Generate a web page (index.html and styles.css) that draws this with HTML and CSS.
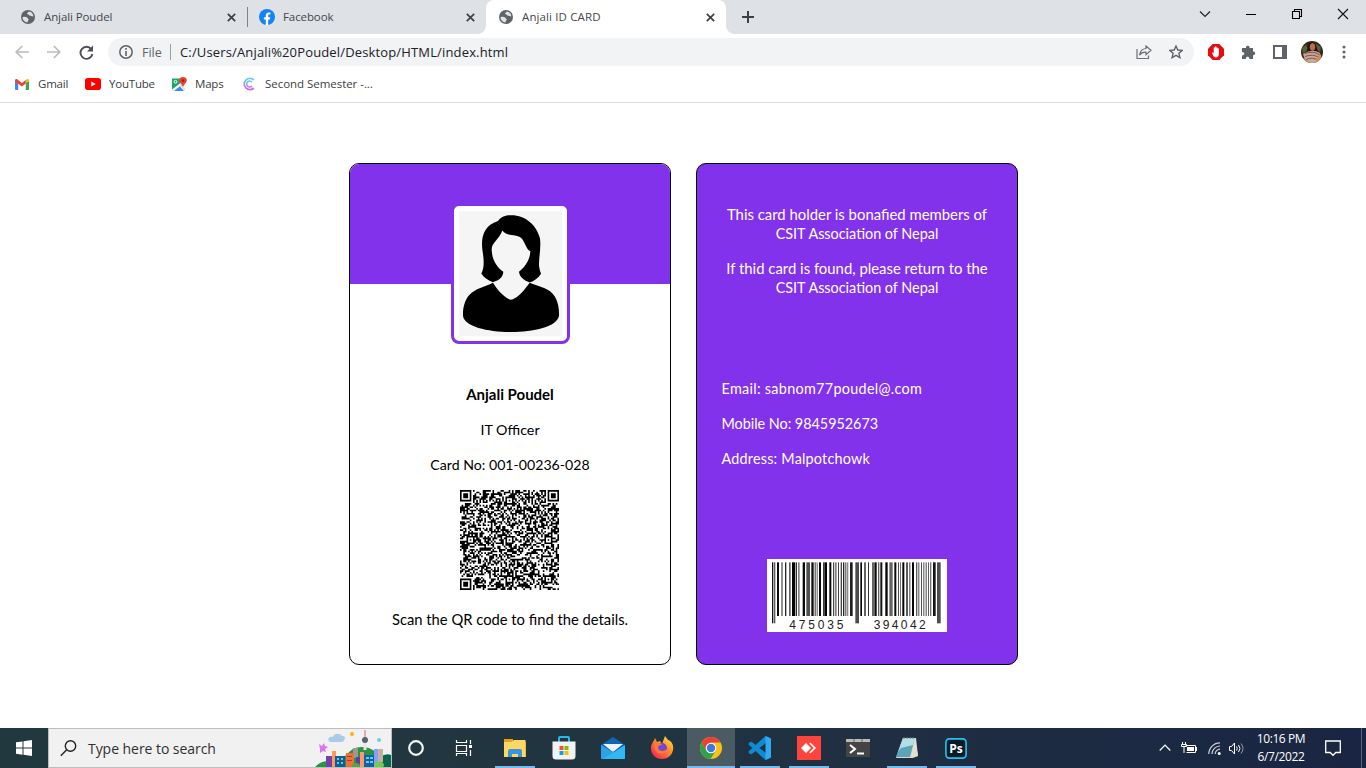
FILE: index.html
```html
<!DOCTYPE html>
<html lang="en">
<head>
<meta charset="utf-8">
<title>Anjali ID CARD</title>
<link rel="stylesheet" href="styles.css">
</head>
<body>
<svg class="defs" width="0" height="0">
  <defs>
    <symbol id="globe" viewBox="0 0 14 14"><circle cx="7" cy="7" r="7" fill="#5f6368"/><path d="M1.500 7.200C3 6.400 5 6.600 6.200 7.400c.8.500.6 1.500 1.600 1.600 0 1.200-.9 1.300-1.300 3.400C3.900 12.300 1.500 10 1.500 7.200zM7.600 1.600c-.2 1.200-1.400 1-1.600 2 .2 1.300 2.200.500 2.400 2 .5.900 2.300.300 3.800 1 .3-2.400-1.400-4.800-4.600-5z" fill="#dee1e6"/></symbol>
    <symbol id="close" viewBox="0 0 9 9"><path d="M.8.8l7.400 7.400M8.200.8L.8 8.200" stroke="#3c4043" stroke-width="1.700"/></symbol>
  </defs>
</svg>

<header class="tabs">
  <div class="tab tab-first"><svg class="fav" width="14" height="14"><use href="#globe"/></svg><span class="tab-title">Anjali Poudel</span><svg class="x" width="9" height="9"><use href="#close"/></svg></div>
  <div class="tab tab-second"><svg class="fav" width="16" height="16" viewBox="0 0 16 16"><circle cx="8" cy="8" r="8" fill="#1183f5"/><path d="M6.800 16v-5.500H4.900V8.200h1.900V6.500c0-2 1.200-3.100 3-3.100.9 0 1.600.1 1.600.1v2h-1c-1 0-1.200.6-1.200 1.200v1.500h2.100l-.4 2.300H9.200V16z" fill="#fff"/></svg><span class="tab-title">Facebook</span><svg class="x" width="9" height="9"><use href="#close"/></svg></div>
  <div class="tab tab-active"><svg class="fav" width="14" height="14"><use href="#globe"/></svg><span class="tab-title">Anjali ID CARD</span><svg class="x" width="9" height="9"><use href="#close"/></svg></div>
  <svg class="plus" width="12" height="12" viewBox="0 0 12 12"><path d="M6 0v12M0 6h12" stroke="#3c4043" stroke-width="2"/></svg>
  <div class="window-controls">
    <svg width="46" height="28" viewBox="0 0 46 28"><path d="M18 11.500l5 5 5-5" fill="none" stroke="#222" stroke-width="1.200"/></svg>
    <svg width="46" height="28" viewBox="0 0 46 28"><path d="M18 14.500h10" stroke="#000"/></svg>
    <svg width="46" height="28" viewBox="0 0 46 28"><path d="M18.500 11.500h7v7h-7zM20.500 11.500v-2h7v7h-2" fill="none" stroke="#000" stroke-width="1.100"/></svg>
    <svg width="46" height="28" viewBox="0 0 46 28"><path d="M18 9l10 10M28 9L18 19" stroke="#111" stroke-width="1.100"/></svg>
  </div>
</header>

<div class="toolbar">
  <div class="nav">
    <svg width="14" height="14" viewBox="0 0 14 14"><path d="M14 7H1.500M7.200 1L1.200 7l6 6" fill="none" stroke="#babcbe" stroke-width="1.700"/></svg>
    <svg width="14" height="14" viewBox="0 0 14 14"><path d="M0 7h12.500M6.800 1l6 6-6 6" fill="none" stroke="#babcbe" stroke-width="1.700"/></svg>
    <svg width="15" height="15" viewBox="0 0 15 15"><path d="M12.300 4.200A6 6 0 1 0 13.400 9" fill="none" stroke="#4a4d51" stroke-width="1.900"/><path d="M14 .6v6H8z" fill="#4a4d51"/></svg>
  </div>
  <div class="omnibox">
    <svg width="14" height="14" viewBox="0 0 14 14"><circle cx="7" cy="7" r="6.200" fill="none" stroke="#5f6368" stroke-width="1.500"/><path d="M7 3v1.700M7 6v5" stroke="#5f6368" stroke-width="1.600"/></svg>
    <span class="scheme">File</span><span class="divider"></span><span class="url">C:/Users/Anjali%20Poudel/Desktop/HTML/index.html</span>
    <svg class="share" width="16" height="15" viewBox="0 0 16 15"><path d="M1 4v9.500h11.500v-3" fill="none" stroke="#6d7074" stroke-width="1.200"/><path d="M10 1l5 4.300-5 4.300V7.200C7 7 5 8 3.500 10.200 4 6.500 6.500 3.800 10 3.500z" fill="none" stroke="#6d7074" stroke-width="1.200"/></svg>
    <svg width="14" height="14" viewBox="0 0 14 14"><path d="M7 1l1.800 4 4.400.4-3.300 2.900 1 4.300L7 10.300l-3.900 2.300 1-4.300L.8 5.400 5.200 5z" fill="none" stroke="#5f6368" stroke-width="1.400"/></svg>
  </div>
  <div class="extensions">
    <svg width="16" height="16" viewBox="0 0 16 16"><path d="M4.700 0h6.600L16 4.700v6.600L11.300 16H4.700L0 11.300V4.700z" fill="#e40d12"/><path d="M4 8.500c.9-.4 1.500.5 1.700 1V4c0-.9 1.300-.9 1.300 0V3c0-.9 1.300-.9 1.300 0v1c0-.9 1.300-.9 1.300 0v1c0-.9 1.300-.9 1.300 0v4.800c0 2.400-1.300 3.600-3 3.600-2.500 0-3-2-3.900-4.900z" fill="#fff"/></svg>
    <svg width="15" height="15" viewBox="0 0 15 15"><path d="M1 3h4V2.500c0-2.400 3.600-2.400 3.600 0V3H12v3.600h.4c2.400 0 2.400 3.700 0 3.700H12V14H8.300v-.6c0-2.300-3.400-2.300-3.400 0v.6H1v-3.600h.4c2.500 0 2.500-3.400 0-3.400H1z" fill="#5f6368"/></svg>
    <svg width="14" height="14" viewBox="0 0 14 14"><path d="M1 1h12v12H1z" fill="none" stroke="#5f6368" stroke-width="2"/><path d="M9 1h4v12H9z" fill="#5f6368"/></svg>
    <svg width="22" height="22" viewBox="0 0 22 22"><clipPath id="face"><circle cx="11" cy="11" r="11"/></clipPath><g clip-path="url(#face)"><path d="M0 0h22v22H0z" fill="#332a1c"/><path d="M1 7l4-3 2 4-5 5zM15 3l5 3-1 5-4-3z" fill="#596039"/><path d="M7 3q4-4 8 1l2 7H6z" fill="#25120e"/><ellipse cx="11.500" cy="6" rx="2.700" ry="3.700" fill="#b86c48"/><path d="M2 13q9-6 17-1l-2 10H5z" fill="#c9a898"/><path d="M4 12.500q8-3 14 1M4 15.500q8-3 14 1M5 18.500q7-3 12 1" fill="none" stroke="#6d4b3e" stroke-width=".9"/><path d="M0 16l6 3 3 3H1zM15 17l5-4v6l-5 3z" fill="#d28b5e"/></g></svg>
    <svg width="4" height="14" viewBox="0 0 4 14"><g fill="#5f6368"><circle cx="2" cy="2" r="1.500"/><circle cx="2" cy="7" r="1.500"/><circle cx="2" cy="12" r="1.500"/></g></svg>
  </div>
</div>

<nav class="bookmarks">
  <div class="bookmark b-gmail"><svg width="14" height="11" viewBox="0 0 14 11"><path d="M0 1.500L3.200 4v7H1a1 1 0 0 1-1-1z" fill="#4285f4"/><path d="M14 1.500L10.800 4v7H13a1 1 0 0 0 1-1z" fill="#34a853"/><path d="M10.800 4V1l1-.7c1-.7 2.200 0 2.200 1.200v1z" fill="#fbbc04"/><path d="M0 2.500v-1C0 .3 1.200-.4 2.200.3L7 4l3.800-3v3.400L7 7.400 0 2.500z" fill="#ea4335"/></svg><span>Gmail</span></div>
  <div class="bookmark b-youtube"><svg width="16" height="12" viewBox="0 0 16 12"><rect width="16" height="12" rx="2.800" fill="#f00"/><path d="M6.300 3.400L10.700 6 6.300 8.600z" fill="#fff"/></svg><span>YouTube</span></div>
  <div class="bookmark b-maps"><svg width="15" height="15" viewBox="0 0 15 15"><path d="M0 1.500h13v12.500H0z" fill="#fff"/><path d="M0 1.500h9l2 5L4 14H0z" fill="#1fa463"/><path d="M2 14l5-5.500 5 5.500z" fill="#4285f4"/><path d="M0 12.500l9-7 1.500 1.800L2 14H0z" fill="#f2f2f2"/><path d="M7.500 8l1-1L13 12v2z" fill="#dadada"/><circle cx="3.500" cy="4.800" r="1.400" fill="none" stroke="#fff"/><path d="M11 0c4.800 0 4.600 4.500 2 6.800-.8.800-1.400 2.200-2 3.200-.6-1-1.200-2.400-2-3.200C6.400 4.500 6.200 0 11 0z" fill="#ea4335"/><circle cx="11" cy="3.700" r="1.400" fill="#9c241a"/></svg><span>Maps</span></div>
  <div class="bookmark b-semester"><svg width="14" height="14" viewBox="0 0 14 14"><linearGradient id="cg" x2="0" y2="1"><stop stop-color="#66cfe8"/><stop offset="1" stop-color="#c86bea"/></linearGradient><path d="M11.800 3A5.600 5.600 0 1 0 11.800 11" fill="none" stroke="url(#cg)" stroke-width="1.800"/><path d="M10 5.200A3 3 0 1 0 10 9" fill="none" stroke="url(#cg)" stroke-width="1.500"/></svg><span>Second Semester -...</span></div>
</nav>

<main class="page">
  <section class="card front">
    <div class="banner">
      <div class="photo">
        <svg width="103" height="125" viewBox="357 167 309 376" preserveAspectRatio="none"><path d="M357 167h309v376H357z" fill="#f5f5f5"/><path d="M474 197C484 183 500 180 514 180C557 180 590 210 600 250C604 285 594 315 598 338C599 346 602 352 603 356C594 370 582 378 569 382C552 376 539 366 537 350C555 335 570 315 571 288C558 282 556 262 545 250C530 234 502 246 487 226C478 253 455 262 455 283C456 315 470 335 490 350C489 366 478 376 459 381C445 376 432 368 424 355C432 340 433 320 428 290C422 250 428 212 474 197Z"/><path d="M459 383C475 410 500 433 513 434C528 433 552 408 569 383C600 396 628 398 645 425C655 442 658 465 657 482C652 515 580 531 513 531C445 531 372 515 369 482C368 460 374 435 388 420C405 400 435 395 459 383Z"/></svg>
      </div>
    </div>
    <div class="front-body">
      <p class="name">Anjali Poudel</p>
      <p class="role">IT Officer</p>
      <p class="number">Card No: 001-00236-028</p>
      <svg class="qr" id="qr" width="99" height="100" viewBox="0 0 61 61" preserveAspectRatio="none"></svg>
      <p class="scan">Scan the QR code to find the details.</p>
    </div>
  </section>
  <section class="card back">
    <div class="notice">
      <p><span class="wide">This card holder is bonafied members of</span><br><span>CSIT Association of Nepal</span></p>
      <p><span class="wide">If thid card is found, please return to the</span><br><span>CSIT Association of Nepal</span></p>
    </div>
    <div class="contact">
      <p class="email">Email: sabnom77poudel@.com</p>
      <p class="mobile">Mobile No: 9845952673</p>
      <p class="address">Address: Malpotchowk</p>
    </div>
    <svg class="barcode" width="180" height="73" viewBox="51 42 540 219"><path d="M51 42h540v219H51z" fill="#fff"/><g id="bars"></g><g class="digits"><text x="118" y="251" textLength="162">475035</text><text x="371" y="251" textLength="156">394042</text></g></svg>
  </section>
</main>

<footer class="taskbar">
  <div class="start"><svg width="16" height="16" viewBox="0 0 16 16"><path d="M0 2.300l6.500-.9v6.100H0zM7.500 1.200L16 0v7.500H7.500zM0 8.500h6.500v6.200L0 13.800zM7.500 8.500H16V16l-8.500-1.200z" fill="#fff"/></svg></div>
  <div class="search">
    <svg width="17" height="17" viewBox="0 0 17 17"><circle cx="10.500" cy="6" r="5.200" fill="none" stroke="#222" stroke-width="1.400"/><path d="M6.700 9.800L.8 15.800" stroke="#222" stroke-width="1.400"/></svg>
    <span>Type here to search</span>
    <svg class="city" width="76" height="37" viewBox="0 -2 76 37"><path d="M0 35q5-6 14-6l18-6q5-9 17-8 10 1 16 10l11 10z" fill="#2a9345"/><path d="M65 25q6-4 11-2v12H62z" fill="#0c6550"/><path d="M15 10c-4-3 0-6 3-5 1-4 7-4 9-1 5-1 3 6-1 6z" fill="#a9cce6"/><path d="M4 12l3 2 2-3 1 3 3 1-3 2 1 3-3-1-3 2v-4z" fill="#dc76f1"/><circle cx="37" cy="2" r="2" fill="#ffb30a"/><circle cx="64" cy="8" r="2" fill="#61d5e4"/><path d="M49.300 6h1.400v-8h-1.400z" fill="#e88599"/><path d="M48.500 10h3v8h-3z" fill="#e4e7eb"/><circle cx="50" cy="8" r="3" fill="#59636c"/><path d="M38 16h5v10h-5z" fill="#999"/><path d="M11 24h8v11h-8z" fill="#7041a9"/><path d="M17 19h4v16h-4z" fill="#ff965b"/><path d="M20 24h10v11H20z" fill="#155c91"/><path d="M22 26h2v2h-2zM26 26h2v2h-2zM22 30h2v2h-2zM26 30h2v2h-2z" fill="#65c4ee"/><path d="M31 21h8v14h-8z" fill="#e96f3c"/><path d="M32 24h5v1h-5zM32 28h5v1h-5z" fill="#a94226"/><path d="M41 25h5v10h-5z" fill="#5b40a4"/><path d="M45 20h4v15h-4z" fill="#ff986f"/><path d="M49 23h11v12H49z" fill="#12629d"/><path d="M51 25h3v2h-3zM55 25h3v2h-3zM51 29h3v2h-3zM55 29h3v2h-3z" fill="#65c8f3"/><path d="M59 17h4v18h-4z" fill="#849fff"/><path d="M63 17h5v13h-5z" fill="#c5b09a"/><ellipse cx="64" cy="33" rx="5" ry="3.500" fill="#77c951"/><ellipse cx="41" cy="34" rx="4" ry="3" fill="#50a744"/></svg>
  </div>
  <div class="apps">
    <div class="app cortana"><svg width="16" height="16" viewBox="0 0 16 16"><circle cx="8" cy="8" r="6.800" fill="none" stroke="#f4f4f4" stroke-width="2.200"/></svg></div>
    <div class="app taskview"><svg width="17" height="16" viewBox="0 0 17 16"><path d="M1.500 0v2.500h10V0M1.500 5.500h10v6h-10zM1.500 16v-2.500h10V16M15.500 0v4M15.500 10v6" fill="none" stroke="#fff" stroke-width="1.200"/><path d="M14 5h3v3h-3z" fill="#fff"/></svg></div>
    <div class="app open"><svg width="22" height="18" viewBox="0 0 22 18"><path d="M0 0h9v3h13v15H0z" fill="#e5a313"/><path d="M0 3h7l3-2h11.500v17H0z" fill="#ffd766"/><path d="M4 18v-6q0-2 2-2h10q2 0 2 2v6h-4v-3H8v3z" fill="#3797dd"/></svg></div>
    <div class="app"><svg width="24" height="24" viewBox="0 0 24 24"><path d="M7 7V2q0-1 1-1h8q1 0 1 1v5" fill="none" stroke="#29b6ed" stroke-width="2"/><path d="M.5 5.500h23V20q0 3.500-3.500 3.500H4Q.5 23.500.5 20z" fill="#f2f2f2"/><path d="M7.500 10h4v4h-4z" fill="#f35325"/><path d="M12.500 10h4v4h-4z" fill="#81bc06"/><path d="M7.500 15h4v4h-4z" fill="#05a6f0"/><path d="M12.500 15h4v4h-4z" fill="#ffba08"/></svg></div>
    <div class="app"><svg width="24" height="22" viewBox="0 0 24 22"><path d="M0 8L12 0l12 8v6H0z" fill="#1265b5"/><path d="M2 7h20L12 15z" fill="#f0f3f6"/><path d="M0 8l24 14H1q-1 0-1-1z" fill="#2ca2e8"/><path d="M24 8v13q0 1-1 1H2z" fill="#31b7f4"/></svg></div>
    <div class="app"><svg width="24" height="24" viewBox="0 0 24 24"><linearGradient id="fx" x1="1" x2=".2" y2="1"><stop stop-color="#fff04a"/><stop offset=".45" stop-color="#ff9428"/><stop offset="1" stop-color="#f52258"/></linearGradient><path d="M5 2l2 4 3-1 2 3 3-8 3 4c4 1 6 6 5 10-1 6-6 9-11 9C5 23 1 18 1 12 1 8 3 7 5 2z" fill="url(#fx)"/><circle cx="12" cy="12" r="5" fill="#7546d8"/><path d="M4 8c3-2 7-1 8 1-3 0-4 1-4 3 1 4 7 4 10 0 0 6-10 8-13 2z" fill="#ff7938"/></svg></div>
    <div class="app open active"><svg width="22" height="22" viewBox="0 0 22 22"><circle cx="11" cy="11" r="11" fill="#fbc116"/><path d="M1.500 5.500A11 11 0 0 1 20.500 5.500H11L6.200 13.700z" fill="#e94235"/><path d="M1.500 5.500L6.300 13.800Q8 16 11 16l-1.500 5.900A11 11 0 0 1 1.500 5.500z" fill="#2ba24c"/><path d="M11 16l4.600-2.200L10.500 22H9.400z" fill="#2ba24c"/><circle cx="11" cy="11" r="5.300" fill="#fff"/><circle cx="11" cy="11" r="4.200" fill="#3c78df"/></svg></div>
    <div class="app open"><svg width="24" height="24" viewBox="0 0 24 24"><path d="M17.500 0L23 2.500v19L17.500 24 1 9q-1-1 0-2l1-1 1.500-.2L18 17V7L3.500 18.200 2 18l-1-1q-1-1 0-2z" fill="#118ad4"/><path d="M17.500 0L23 2.500v19L17.500 24z" fill="#2daaf0"/></svg></div>
    <div class="app open"><svg width="24" height="24" viewBox="0 0 24 24"><path d="M0 0h24v24H0z" fill="#ff443b"/><path d="M9 7l5 5-5 5-5-5zM12.200 7.500l1.200-1.100L19 12l-5.600 5.600-1.200-1.100 4.500-4.500z" fill="#fff"/></svg></div>
    <div class="app"><svg width="24" height="18" viewBox="0 0 24 18"><path d="M0 0h24v18H0z" fill="#444"/><path d="M0 0h24v3H0z" fill="#bbb"/><path d="M8 0v3M16 0v3" stroke="#666"/><path d="M4 6l5 4-5 4M11 14.500h7" fill="none" stroke="#fff" stroke-width="2"/></svg></div>
    <div class="app open"><svg width="24" height="22" viewBox="0 0 24 22"><path d="M8 1h13l2 18-5 2H1z" fill="#d8d8cf"/><path d="M8 1h12l-5 19H1z" fill="#5aa3b8"/><path d="M8 1h12l-2 7-12 3-3 4z" fill="#b5dde6"/><path d="M20 1l3 18-7 1z" fill="#e4e0cf"/><path d="M9 0v2M12 0v2M15 0v2M18 0v2" stroke="#777"/></svg></div>
    <div class="app open"><svg class="ps" width="22" height="21" viewBox="0 0 22 21"><rect x=".9" y=".9" width="20.200" height="19.200" rx="3.500" fill="#071c2b" stroke="#25c5ed" stroke-width="1.600"/><text x="11" y="14.500" text-anchor="middle">Ps</text></svg></div>
  </div>
  <div class="tray">
    <svg class="t-up" width="12" height="8" viewBox="0 0 12 8"><path d="M.7 6.500L6 1.200l5.300 5.300" fill="none" stroke="#fff" stroke-width="1.200"/></svg>
    <svg class="t-battery" width="16" height="12" viewBox="0 0 16 12"><path d="M4.500 3.500h10v7h-9M15.500 5v4" fill="none" stroke="#fff"/><path d="M6 5h7v4H6z" fill="#fff"/><path d="M1.500 0v2M4.500 0v2M.5 2.500h5v2h-5zM3 5v6" fill="none" stroke="#fff"/></svg>
    <svg class="t-wifi" width="13" height="13" viewBox="0 0 13 13"><path d="M.8 12A11.200 11.200 0 0 1 12 .8M4 12a8 8 0 0 1 8-8M7.200 12A4.800 4.800 0 0 1 12 7.200" fill="none" stroke="#cbd0d8" stroke-width="1.200"/><circle cx="11.200" cy="11.500" r="1.500" fill="#fff"/></svg>
    <svg class="t-sound" width="17" height="13" viewBox="0 0 17 13"><path d="M.5 4.500h2l3-3.500v11l-3-3.500h-2z" fill="none" stroke="#fff"/><path d="M7.500 4.500q1.500 2 0 4M9.500 3q3 3.500 0 7" fill="none" stroke="#fff"/><path d="M12 1.500q4 5 0 10" fill="none" stroke="#949ca9"/></svg>
    <div class="clock"><span>10:16 PM</span><span>6/7/2022</span></div>
    <svg class="t-note" width="16" height="17" viewBox="0 0 16 17"><path d="M.7 1h14.600v11.500h-4.500L8 15.300l-2.800-2.800H.7z" fill="none" stroke="#fff" stroke-width="1.300"/></svg>
    <span class="peek"></span>
  </div>
</footer>
<script src="codes.js"></script>
</body>
</html>
```
FILE: styles.css
```css
* { box-sizing: border-box; }
body { margin: 0; width: 1366px; height: 768px; overflow: hidden; display: flex; flex-direction: column; background: #fff; font-family: "Open Sans", "Noto Sans", sans-serif; font-size: 12px; color: #3c4043; }
svg { display: block; flex: none; }
span, p { white-space: nowrap; }
.defs { position: absolute; }

.tabs { height: 34px; flex: none; display: flex; align-items: center; background: #dee1e6; }
.tab { height: 34px; display: flex; align-items: center; color: #45484c; }
.tab-title { flex: 1; font-size: 11.5px; letter-spacing: -.1px; padding-bottom: 2px; }
.tab-first { width: 248px; padding-left: 21px; }
.tab-first::after { content: ""; width: 1px; height: 20px; margin-left: 11px; background: #808386; }
.tab-first .fav { margin-right: 9px; }
.tab-second { width: 238px; padding: 0 11px; }
.tab-second .fav { margin-right: 8px; }
.tab-active { width: 240px; padding: 0 11px 0 13px; background: #fff; border-radius: 8px 8px 0 0; position: relative; }
.tab-active .fav { margin-right: 9px; }
.tab-active .tab-title { letter-spacing: .12px; }
.tab-active::before, .tab-active::after { content: ""; position: absolute; bottom: 0; width: 8px; height: 8px; }
.tab-active::before { left: -8px; background: radial-gradient(circle at 0 0, #dee1e6 7.500px, #fff 8px); }
.tab-active::after { right: -8px; background: radial-gradient(circle at 100% 0, #dee1e6 7.500px, #fff 8px); }
.plus { margin-left: 16px; }
.window-controls { display: flex; margin-left: auto; align-self: flex-start; }

.toolbar { height: 36px; flex: none; display: flex; align-items: center; }
.nav { width: 108px; display: flex; align-items: center; gap: 18px; padding-left: 15px; }
.omnibox { width: 1086px; height: 28px; border-radius: 14px; background: #f1f3f4; display: flex; align-items: center; padding: 0 11px; }
.scheme { margin-left: 9px; font-size: 12.500px; color: #5f6368; width: 21px; }
.divider { width: 1px; height: 16px; margin: 0 9px 0 7px; background: #9aa0a6; }
.url { color: #202124; font-size: 13px; letter-spacing: .15px; }
.share { margin-left: auto; margin-right: 17px; }
.extensions { display: flex; align-items: center; padding-left: 14px; }
.extensions svg:nth-child(2) { margin-left: 17px; }
.extensions svg:nth-child(3) { margin-left: 17px; }
.extensions svg:nth-child(4) { margin-left: 14px; }
.extensions svg:nth-child(5) { margin-left: 19px; }

.bookmarks { height: 33px; flex: none; display: flex; align-items: center; padding: 0 15px 4px; border-bottom: 1px solid #dadce0; }
.bookmark { display: flex; align-items: center; gap: 9px; font-size: 11.500px; letter-spacing: -.2px; }
.bookmark span { padding-bottom: 2px; }
.b-gmail { width: 70px; }
.b-youtube { width: 87px; gap: 8px; }
.b-maps { width: 70px; gap: 8px; }
.b-semester { letter-spacing: -.04px; }

.page { flex: 1; display: flex; gap: 25px; padding: 60px 0 0 349px; font-family: Lato, "Open Sans", sans-serif; font-size: 14.400px; line-height: 19px; color: #000; }
.page p { margin: 0 0 16px; height: 19px; }
.card { width: 322px; height: 502px; border: 1px solid #000; border-radius: 10px; overflow: hidden; }
.banner { height: 120px; background: #8332ec; display: flex; justify-content: center; align-items: flex-start; padding-top: 39px; }
.photo { border: 3px solid #8332ec; border-radius: 8px; background: #fff; padding: 5px; }
.front-body { height: 380px; padding-top: 101px; display: flex; flex-direction: column; align-items: center; }
.front .name { font-weight: 700; font-size: 15px; }
.front .role { font-size: 14.300px; }
.front .number { margin-bottom: 16px; font-size: 14.150px; }
.front .scan { font-size: 14.750px; }
.qr { margin: 0 1px 20px 0; }
.back { background: #8332ec; color: #fff; display: flex; flex-direction: column; }
.notice { height: 216px; padding-top: 41px; text-align: center; }
.page .notice p { height: 38px; }
.wide { font-size: 14.880px; }
.contact { height: 179px; padding: 0 0 0 24.500px; margin-top: -1px; }
.email { letter-spacing: .3px; }
.mobile { letter-spacing: -.03px; }
.address { letter-spacing: .2px; }
.barcode { align-self: center; margin-top: 1px; }
.digits { font: 36px "Liberation Sans", Arial, sans-serif; fill: #222; }

.taskbar { height: 40px; flex: none; display: flex; background: linear-gradient(90deg, #22383f, #213540 45%, #1f2d43 70%, #192542); color: #fff; }
.start { width: 48px; display: flex; align-items: center; justify-content: center; }
.search { width: 344px; border: 1px solid #bdbdbd; background: #f1f1f1; display: flex; align-items: center; padding-left: 11px; }
.search span { margin-left: 11px; font-size: 14px; letter-spacing: -.05px; color: #303030; }
.city { margin-left: auto; align-self: flex-end; }
.apps { display: flex; }
.app { width: 49px; display: flex; align-items: center; justify-content: center; position: relative; }
.cortana { padding-right: 1px; }
.taskview { padding-right: 4px; }
.open::after { content: ""; position: absolute; left: 5px; right: 4px; bottom: 0; height: 2px; background: #76b9ed; }
.active { background: #4b5b63; width: 48px; margin-left: 1px; }
.active::after { left: 0; right: 0; }
.ps { font: bold 12px "Open Sans", sans-serif; fill: #fff; }
.tray { flex: 1; display: flex; align-items: center; justify-content: flex-end; }
.t-battery { margin-left: 10px; }
.t-wifi { margin-left: 11px; }
.t-sound { margin-left: 8px; }
.clock { width: 58px; margin-left: 6px; display: flex; flex-direction: column; align-items: center; font-size: 12px; line-height: 18px; letter-spacing: -.4px; }
.t-note { margin-left: 15px; }
.peek { width: 5px; height: 40px; margin-left: 20px; border-left: 1px solid #5b6579; }
```
FILE: codes.js
```js
(function () {
  // Version 11 symbol: finder, timing and alignment patterns over a module field.
  var n = 61, grid = [], seed = 90217;
  function rnd() { seed = (seed * 1103515245 + 12345) % 2147483648; return seed / 2147483648; }
  for (var y = 0; y < n; y++) {
    grid.push([]);
    for (var x = 0; x < n; x++) grid[y].push(rnd() < 0.51);
  }
  for (var t = 0; t < n; t++) { grid[6][t] = grid[t][6] = t % 2 === 0; }
  function rings(cx, cy, r, dark) {
    for (var j = -r; j <= r; j++) for (var i = -r; i <= r; i++) {
      var yy = cy + j, xx = cx + i;
      if (grid[yy] && xx >= 0 && xx < n) grid[yy][xx] = dark[Math.max(Math.abs(i), Math.abs(j))];
    }
  }
  [[3, 3], [57, 3], [3, 57]].forEach(function (c) { rings(c[0], c[1], 4, [true, true, false, true, false]); });
  [[30, 6], [6, 30], [30, 30], [54, 30], [30, 54], [54, 54]].forEach(function (c) { rings(c[0], c[1], 2, [true, false, true]); });
  var d = '';
  grid.forEach(function (row, y) { row.forEach(function (on, x) { if (on) d += 'M' + x + ' ' + y + 'h1v1h-1z'; }); });
  document.getElementById('qr').innerHTML = '<path d="' + d + '"/>';

  // Each bar: left edge, width, grey level, and 1 for a long guard bar.
  var bars = [[66,4,20,1],[72,4,90,1],[81,6,10],[94,4,90],[105,4,40],[117,5,95],[126,10,5],[138,3,50],[144,5,130],[158,7,10],[169,11,80],[184,7,15],[194,3,50],[200,3,90],[207,6,10],[219,5,60],[224,7,5],[238,6,10],[249,3,70],[254,6,130],[264,3,70],[272,4,70],[279,4,40],[286,3,60],[291,4,140],[300,8,30],[316,11,75,1],[331,5,10],[342,6,100],[354,3,50],[366,9,100],[375,5,10],[384,4,100],[391,6,20],[406,7,5],[418,10,100],[433,6,10],[444,3,80],[450,3,110],[457,6,5],[468,6,90],[478,3,60],[486,6,5],[498,4,90],[505,3,80],[513,3,80],[520,3,80],[527,3,70],[534,3,90],[540,4,110],[549,8,20],[561,11,75,1]];
  document.getElementById('bars').innerHTML = bars.map(function (b) {
    return '<rect x="' + b[0] + '" y="52" width="' + b[1] + '" height="' + (b[3] ? 183 : 161) + '" fill="rgb(' + b[2] + ',' + b[2] + ',' + b[2] + ')"/>';
  }).join('');
})();
```
